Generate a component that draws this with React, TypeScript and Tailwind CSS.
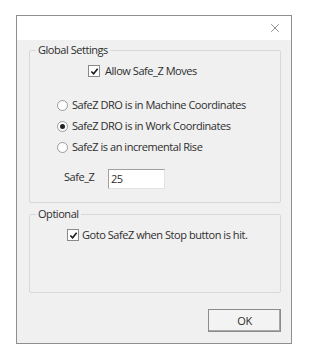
import { X } from 'lucide-react'

const font = { fontFamily: '"Open Sans", "Noto Sans", sans-serif' }

function Check({ className = '' }: { className?: string }) {
  return (
    <span className={`flex h-[12px] w-[12px] items-center justify-center border border-[#8a8a8a] bg-white ${className}`}>
      <svg viewBox="0 0 10 10" className="h-[9px] w-[9px]">
        <path d="M1.5 5 L4 7.5 L8.5 2" fill="none" stroke="#1a1a1a" strokeWidth="1.8" />
      </svg>
    </span>
  )
}

function Radio({ on = false }: { on?: boolean }) {
  return (
    <span className="flex h-[11px] w-[11px] items-center justify-center rounded-full border border-[#9a9a9a] bg-white">
      {on && <span className="h-[5px] w-[5px] rounded-full bg-[#222]" />}
    </span>
  )
}

export default function App() {
  return (
    <div
      className="h-[359px] w-[316px] bg-white pl-[16px] pt-[15px] text-[11px] leading-[14px] tracking-[-0.45px] text-[#2e2e2e]"
      style={font}
    >
      <div className="flex h-[329px] w-[276px] flex-col border border-[#8f8f8f] bg-[#f0f0f0]">
        <div className="flex h-[24px] items-center justify-end bg-white pr-[9px]">
          <X className="h-[14px] w-[14px] text-[#555]" strokeWidth={1.1} />
        </div>

        <div className="flex flex-col pl-[12px] pr-[10px]">
          <fieldset className="mt-[3px] flex h-[160px] flex-col rounded-[2px] border border-[#d8d8d8]">
            <legend className="ml-[6px] px-[2px] leading-[14px]">Global Settings</legend>

            <label className="ml-[58px] mt-[7px] flex items-center gap-[5px]">
              <Check />
              <span>Allow Safe_Z Moves</span>
            </label>

            <div className="ml-[27px] mt-[20px] flex flex-col gap-[7px]">
              <label className="flex items-center gap-[4px]">
                <Radio />
                <span>SafeZ DRO is in Machine Coordinates</span>
              </label>
              <label className="flex items-center gap-[4px]">
                <Radio on />
                <span>SafeZ DRO is in Work Coordinates</span>
              </label>
              <label className="flex items-center gap-[4px]">
                <Radio />
                <span>SafeZ is an incremental Rise</span>
              </label>
            </div>

            <div className="ml-[34px] mt-[15px] flex items-start">
              <span className="mt-[1px] w-[44px]">Safe_Z</span>
              <div className="flex h-[20px] w-[57px] items-center border border-[#a0a0a0] border-b-[#e3e3e3] border-r-[#e3e3e3] bg-white pl-[2px]">
                25
              </div>
            </div>
          </fieldset>

          <fieldset className="mt-[4px] flex h-[86px] flex-col rounded-[2px] border border-[#d8d8d8]">
            <legend className="ml-[6px] px-[2px] leading-[14px]">Optional</legend>
            <label className="ml-[37px] mt-[7px] flex items-center gap-[3px]">
              <Check />
              <span>Goto SafeZ when Stop button is hit.</span>
            </label>
          </fieldset>

          <div className="mt-[16px] flex justify-end">
            <button className="h-[23px] w-[73px] border border-[#8c8c8c] bg-[#f3f3f3] shadow-[inset_-1px_-1px_0_#a8a8a8]">
              OK
            </button>
          </div>
        </div>
      </div>
    </div>
  )
}
